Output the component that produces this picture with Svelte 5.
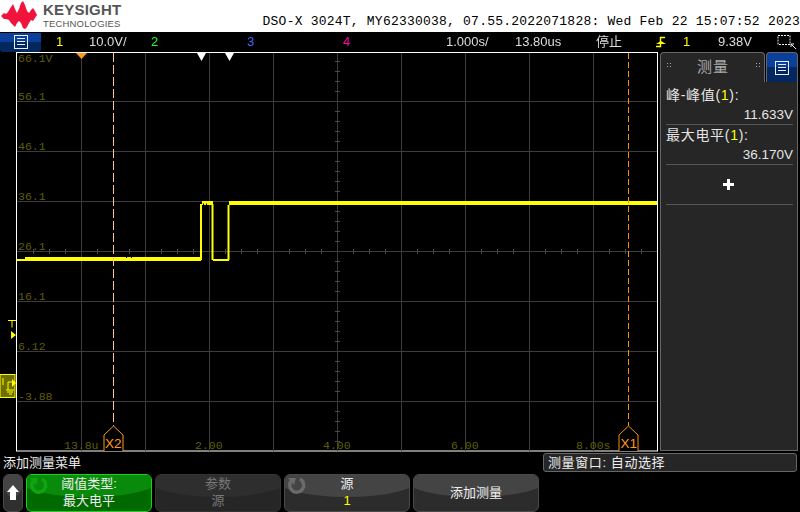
<script>
  const gridX = [81, 145, 209, 273, 337, 401, 465, 529, 593];
  const gridY = [101, 151, 201, 251, 301, 351, 401];
  const ticksX = Array.from({ length: 40 }, (_, i) => 17 + i * 16).filter((x) => (x - 17) % 64 !== 0);
  const ticksY = Array.from({ length: 40 }, (_, i) => 51 + i * 10).filter((y) => (y - 51) % 50 !== 0 && y > 52 && y < 451);
  const vLabels = [
    ['66.1V', 62], ['56.1', 100], ['46.1', 150], ['36.1', 200],
    ['26.1', 250], ['16.1', 300], ['6.12', 350], ['-3.88', 400]
  ];
  const hLabels = [['13.8u', 64], ['2.00', 195], ['4.00', 323], ['6.00', 451], ['8.00s', 576]];
  const readings = [
    { name: '峰-峰值', value: '11.633V' },
    { name: '最大电平', value: '36.170V' }
  ];
</script>

<div class="scope">
  <header class="top">
    <div class="brand">
      <svg class="wave" viewBox="0 0 38 32" width="38" height="32">
        <path d="M1 16 L4 13 L6 14 L8 12 L11 7 L13 4 L15 9 L17 13 L19 9 L21 3 L23 1 L25 5 L27 11 L29 13 L31 10 L33 8 L35 11 L37 15 L35 18 L33 21 L31 20 L29 23 L27 27 L25 29 L23 28 L21 23 L19 21 L17 23 L15 27 L13 25 L11 23 L9 20 L6 19 L4 19 Z" fill="#f0143c"/>
      </svg>
      <div class="brand-text">
        <div class="brand-name">KEYSIGHT</div>
        <div class="brand-sub">TECHNOLOGIES</div>
      </div>
    </div>
    <div class="ident">DSO-X 3024T, MY62330038, 07.55.2022071828: Wed Feb 22 15:07:52 2023</div>
  </header>

  <div class="status">
    <div class="menu-btn">
      <svg viewBox="0 0 14 14" width="14" height="14"><rect x=".5" y=".5" width="13" height="13" fill="none" stroke="#e8eef8"/><path d="M3 3.500h8M3 6.500h8M3 9.500h8" stroke="#e8eef8"/></svg>
    </div>
    <span class="yl">1</span>
    <span>10.0V/</span>
    <span class="gn">2</span>
    <span class="bl">3</span>
    <span class="pk">4</span>
    <span>1.000s/</span>
    <span>13.80us</span>
    <span>停止</span>
    <svg viewBox="0 0 12 12" width="12" height="12"><path d="M1 10.500h4.500V1.500H10" fill="none" stroke="#ff0" stroke-width="1.400"/><path d="M1 8l5-3 5 3z" fill="#ff0"/></svg>
    <span class="yl">1</span>
    <span>9.38V</span>
    <svg viewBox="0 0 20 16" width="20" height="16"><rect x="1" y="1.500" width="12" height="9" fill="none" stroke="#eee" stroke-dasharray="2 1"/><path d="M14 10l5 5M14 10h3M14 10v3" stroke="#eee"/></svg>
  </div>

  <div class="main">
    <svg class="plot" viewBox="0 52 660 400" width="660" height="400">
      <rect x="16.500" y="52.500" width="641" height="398.500" fill="#000" stroke="#fff"/>
      {#each gridX as x}<line x1={x + .5} x2={x + .5} y1="53" y2="451" stroke="#3c3c3c"/>{/each}
      {#each gridY as y}<line x1="17" x2="657" y1={y + .5} y2={y + .5} stroke="#3c3c3c"/>{/each}
      {#each ticksX as x}<line x1={x + .5} x2={x + .5} y1="249" y2="254" stroke="#4a4a4a"/>{/each}
      {#each ticksY as y}<line x1="335" x2="340" y1={y + .5} y2={y + .5} stroke="#4a4a4a"/>{/each}

      {#each vLabels as [t, y]}<text class="axis" x="18" {y}>{t}</text>{/each}
      {#each hLabels as [t, x]}<text class="axis" {x} y="449">{t}</text>{/each}

      <path d="M17 259h8v2h-8z M25 257h176v4h-176z" fill="#ff0"/>
      <path d="M126 257h1v1h-1z M131 257h1v1h-1z" fill="#000"/>
      <path d="M201 204v56M212.500 204v56M213 260h16M228.500 260v-55" fill="none" stroke="#ff0" stroke-width="2"/>
      <path d="M202 201h11v4h-11z M229 201h428v4h-428z" fill="#ff0"/>
      <path d="M203 203.500h1v1.500h-1z M206 203.500h1v1.500h-1z" fill="#000"/>

      <line x1="113.500" x2="113.500" y1="53" y2="426" stroke="#fcc680" stroke-dasharray="9 3"/>
      <line x1="628.500" x2="628.500" y1="53" y2="426" stroke="#ff9100" stroke-dasharray="6 3"/>
      <path d="M104 451v-16l9.500-9 9.500 9v16" fill="#000" stroke="#ff9a1c"/>
      <path d="M619 451v-16l9.500-9 9.500 9v16" fill="#000" stroke="#ff9100"/>
      <text class="cur" x="105" y="448">X2</text>
      <text class="cur" x="620.500" y="448">X1</text>

      <path d="M76 53h11l-5.500 6z" fill="#ff9a1c"/>
      <path d="M197 53h9l-4.500 8z M225 53h9l-4.500 8z" fill="#fff"/>

      <path d="M8 320.500h8M12 320.500v7" stroke="#ff0" fill="none"/>
      <path d="M11 331l5 4-5 4z" fill="#ff0"/>

      <rect x="0" y="374.500" width="15" height="23" fill="#6e6e00" stroke="#ff0"/>
      <path d="M3 378v7M8 390v-8h5M6 390h8M7 392h6M9 394h3" stroke="#ff0" fill="none"/>
      <path d="M12 379l4 4-4 4z" fill="#ff0"/>
    </svg>

    <aside class="panel">
      <div class="tabs">
        <div class="tab">
          <span class="dots"></span>
          <span>测量</span>
          <span class="dots"></span>
        </div>
        <div class="tab-blue">
          <svg viewBox="0 0 14 14" width="14" height="14"><rect x=".5" y=".5" width="13" height="13" fill="none" stroke="#e8eef8"/><path d="M3 3.500h8M3 6.500h8M3 9.500h8" stroke="#e8eef8"/></svg>
        </div>
      </div>
      <div class="readings">
        {#each readings as r}
          <div class="reading">
            <div class="r-name">{r.name}(<span class="yl">1</span>):</div>
            <div class="r-val">{r.value}</div>
          </div>
        {/each}
        <div class="add">
          <svg viewBox="0 0 11 11" width="11" height="11"><path d="M4 0h3v4h4v3H7v4H4V7H0V4h4z" fill="#fff"/></svg>
        </div>
      </div>
    </aside>
  </div>

  <div class="bottom">
    <div class="info">
      <div class="menu-title">添加测量菜单</div>
      <div class="window">测量窗口: 自动选择</div>
    </div>
    <div class="keys">
      <button class="key up" aria-label="up">
        <svg viewBox="0 0 12 15" width="12" height="15"><path d="M6 0l6 7H9v8H3V7H0z" fill="#fff"/></svg>
      </button>
      <button class="key soft on">
        <svg class="spin" viewBox="0 0 20 20" width="20" height="20"><path d="M13 4a7 7 0 1 1-8 1" fill="none" stroke="#10a510" stroke-width="3.500"/><path d="M1 3l8 0-2 7z" fill="#10a510"/></svg>
        <span>阈值类型:</span><span>最大电平</span>
      </button>
      <button class="key soft off">
        <span>参数</span><span>源</span>
      </button>
      <button class="key soft">
        <svg class="spin" viewBox="0 0 20 20" width="20" height="20"><path d="M13 4a7 7 0 1 1-8 1" fill="none" stroke="#6a6a6a" stroke-width="3.500"/><path d="M1 3l8 0-2 7z" fill="#6a6a6a"/></svg>
        <span>源</span><span class="yl">1</span>
      </button>
      <button class="key soft single"><span>添加测量</span></button>
    </div>
  </div>
</div>

<style>
  :global(body) { margin: 0; background: #000; }
  .scope {
    width: 800px;
    height: 512px;
    display: flex;
    flex-direction: column;
    overflow: hidden;
    background: #000;
    color: #ddd;
    font-family: "Liberation Sans", "Noto Sans CJK SC", sans-serif;
    font-size: 13px;
  }
  .yl { color: #ff0; }
  .gn { color: #2f2; }
  .bl { color: #46f; }
  .pk { color: #f0a; }

  .top {
    height: 32px;
    background: #fff;
    display: flex;
    justify-content: space-between;
    flex: none;
  }
  .brand { display: flex; gap: 5px; }
  .brand-text { color: #555; padding-top: 2px; }
  .brand-name { font-weight: 700; font-size: 15px; line-height: 16px; letter-spacing: .2px; }
  .brand-sub { font-size: 9.500px; line-height: 11px; letter-spacing: .17px; }
  .ident {
    align-self: flex-end;
    color: #000;
    font-family: "Liberation Mono", monospace;
    font-size: 13px;
    letter-spacing: .22px;
    line-height: 16px;
    white-space: nowrap;
    margin-bottom: 2px;
  }

  .status {
    height: 20px;
    flex: none;
    display: grid;
    grid-template-columns: 56px 33px 62px 96px 96px 103px 69px 81px 59px 28px 35px 59px 23px;
    align-items: center;
    line-height: 20px;
    white-space: nowrap;
    will-change: transform;
  }
  .menu-btn {
    width: 41px;
    height: 19px;
    border-radius: 0 0 3px 3px;
    background: linear-gradient(#0a3f9c 0 50%, #05275f 50%);
    display: flex;
    align-items: center;
    justify-content: center;
  }

  .main { height: 400px; flex: none; display: flex; }
  .plot { display: block; flex: none; }
  .axis {
    font-family: "Liberation Mono", monospace;
    font-size: 11.500px;
    fill: #5f5f00;
  }
  .cur { font-size: 13.500px; fill: #ff9a1c; }

  .panel {
    width: 138px;
    height: 399px;
    flex: none;
    display: flex;
    flex-direction: column;
  }
  .tabs { display: flex; height: 30px; gap: 1px; }
  .tab {
    width: 105px;
    box-sizing: border-box;
    background: #262626;
    border: 1px solid #666;
    border-bottom: 0;
    border-radius: 4px 4px 0 0;
    display: flex;
    align-items: center;
    justify-content: space-between;
    padding: 0 4px 4px 5px;
    color: #aaa;
    font-size: 15px;
    letter-spacing: 1px;
  }
  .dots {
    width: 5px;
    height: 7px;
    background-image: radial-gradient(#aaa 0.7px, transparent 0.8px);
    background-size: 3px 3px;
  }
  .tab-blue {
    width: 32px;
    border-radius: 4px 4px 0 0;
    border: 1px solid #666;
    border-bottom: 0;
    box-sizing: border-box;
    background: linear-gradient(#0a3f9c 0 50%, #05275f 50%);
    display: flex;
    align-items: center;
    justify-content: center;
  }
  .readings {
    flex: 1;
    box-sizing: border-box;
    background: #262626;
    border: 1px solid #666;
    border-top: 0;
    padding: 3px 4px 0 5px;
  }
  .reading {
    height: 40px;
    box-sizing: border-box;
    border-bottom: 1px solid #555;
    color: #e4e4e4;
    font-size: 14px;
    line-height: 20px;
    letter-spacing: .7px;
  }
  .r-val { text-align: right; font-size: 13.500px; letter-spacing: 0; }
  .add {
    height: 40px;
    box-sizing: border-box;
    border-bottom: 1px solid #555;
    display: flex;
    align-items: center;
    justify-content: center;
    padding-right: 2px;
  }

  .bottom { flex: 1; display: flex; flex-direction: column; }
  .info { height: 21px; display: flex; justify-content: space-between; padding-top: 1px; flex: none; }
  .menu-title { padding-left: 3px; font-size: 13px; line-height: 19px; color: #eee; }
  .window {
    width: 254px;
    height: 19px;
    box-sizing: border-box;
    margin-right: 3px;
    background: #262626;
    border: 1px solid #666;
    border-radius: 3px;
    padding-left: 4px;
    line-height: 17px;
    font-size: 13px;
    letter-spacing: .6px;
    color: #eee;
  }
  .keys { display: flex; gap: 3px; padding-left: 3px; height: 38px; }
  .key {
    position: relative;
    overflow: hidden;
    padding: 0 0 2px;
    font: inherit;
    color: #eee;
    box-sizing: border-box;
    border: 1px solid #4a4a4a;
    border-radius: 6px;
    background: #2c2c2c;
    display: flex;
    flex-direction: column;
    align-items: center;
    justify-content: center;
    line-height: 17px;
  }
  .key::before {
    content: "";
    position: absolute;
    left: -10%;
    right: -10%;
    top: -18px;
    height: 40px;
    border-radius: 50%;
    background: #444;
  }
  .key > * { position: relative; }
  .up { width: 20px; background: #2f2f2f; }
  .soft { width: 126px; }
  .single { font-size: 13px; }
  .on { background: #006a00; border-color: #1fd01f; }
  .on::before { background: #0a8a0a; }
  .off { color: #777; background: #262626; border-color: #333; }
  .off::before { background: #2e2e2e; }
  .key > .spin { position: absolute; left: 2px; top: 0; }
</style>
